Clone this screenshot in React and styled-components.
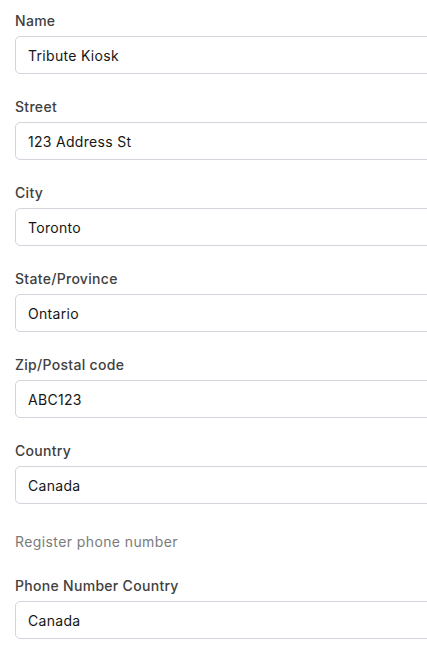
import React from 'react';
import styled, { createGlobalStyle } from 'styled-components';

const GlobalStyle = createGlobalStyle`
  html, body {
    margin: 0;
    padding: 0;
    background: #fff;
    overflow: hidden;
  }
  body {
    font-family: Inter, "Noto Sans", sans-serif;
  }
`;

const fields = [
    { label: 'Name', value: 'Tribute Kiosk' },
    { label: 'Street', value: '123 Address St' },
    { label: 'City', value: 'Toronto' },
    { label: 'State/Province', value: 'Ontario' },
    { label: 'Zip/Postal code', value: 'ABC123' },
    { label: 'Country', value: 'Canada' },
];

const App = () => {
    return (
        <>
            <GlobalStyle />
            <Page>
                <Form>
                    {fields.map((f) => (
                        <Field key={f.label}>
                            <Label>{f.label}</Label>
                            <Input readOnly value={f.value} />
                        </Field>
                    ))}
                    <SectionNote>Register phone number</SectionNote>
                    <Field>
                        <Label>Phone Number Country</Label>
                        <Input readOnly value="Canada" />
                    </Field>
                </Form>
            </Page>
        </>
    );
};

const Page = styled.div`
  width: 100vw;
  height: 100vh;
  overflow: hidden;
`;

const Form = styled.div`
  width: 450px;
  padding: 11px 0 0 15px;
  display: flex;
  flex-direction: column;
`;

const Field = styled.div`
  display: flex;
  flex-direction: column;
  margin-bottom: 23px;
`;

const Label = styled.label`
  font-size: 14px;
  line-height: 20px;
  font-weight: 500;
  letter-spacing: 0.3px;
  color: #404040;
  margin-bottom: 5px;
`;

const Input = styled.input`
  box-sizing: border-box;
  height: 38px;
  width: 100%;
  padding: 0 12px;
  border: 1px solid #d5d3db;
  border-radius: 5px;
  background: #fff;
  font-family: inherit;
  font-size: 14px;
  letter-spacing: 0.3px;
  color: #161616;
  outline: none;
`;

const SectionNote = styled.div`
  font-size: 14px;
  line-height: 20px;
  letter-spacing: 0.4px;
  color: #7b7b7b;
  margin: 5px 0 24px;
`;

export default App;
